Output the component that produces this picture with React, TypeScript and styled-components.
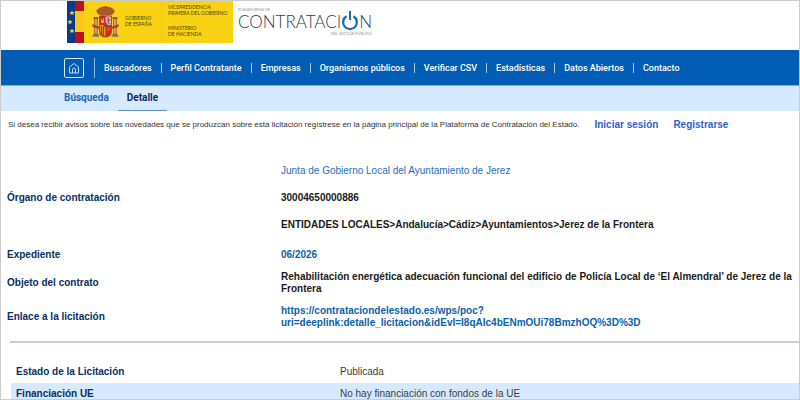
import React from 'react';
import styled, { createGlobalStyle } from 'styled-components';

const GlobalStyle = createGlobalStyle`
  * { box-sizing: border-box; }
  body { margin: 0; background: #fff; overflow: hidden; }
  a { text-decoration: none; color: inherit; }
`;

const Page = styled.div`
  height: 100vh;
  overflow: hidden;
  border: 1px solid #ccc;
  background: #fff;
  font-family: 'Liberation Sans', Arial, sans-serif;
  font-size: 10px;
  line-height: 12px;
  color: #1c1c1c;
`;

const Header = styled.header`
  display: flex;
  align-items: flex-start;
  gap: 5px;
  height: 49px;
  padding-left: 66px;
`;

const GovernmentLogo = styled.div`
  display: flex;
  width: 166px;
  height: 42px;
  background: #f8d213;
  color: #4d4314;
  font-family: Lato, sans-serif;
  font-size: 5px;
  font-weight: 400;
  line-height: 6px;
  white-space: nowrap;

  svg { flex: none; }
`;

const GovernmentName = styled.div`
  width: 41px;
  padding: 14px 0 0 5px;
`;

const Ministry = styled.div`
  display: flex;
  flex-direction: column;
  gap: 9px;
  border-left: 1px solid #edc61a;
  padding: 3px 0 0 6px;
`;

const PlatformLogo = styled.div`
  display: flex;
  flex-direction: column;
  padding-top: 6px;
  color: #8c95a5;
  font-family: Lato, sans-serif;
  font-size: 4px;
  line-height: 6px;
`;

const PlatformWord = styled.div`
  display: flex;
  align-items: center;
  height: 17px;
  color: #2c3a55;
  font-size: 17px;
  font-weight: 300;
  line-height: 17px;
`;

const PlatformSector = styled.span`
  align-self: flex-end;
  padding-top: 1px;
`;

const MainNav = styled.nav`
  display: flex;
  align-items: center;
  height: 36px;
  padding-left: 63px;
  background: #005cb5;
  border-bottom: 1px solid #78aadf;
  color: #fff;
  font-family: Roboto, sans-serif;
  font-weight: 500;
  font-size: 9px;
`;

const HomeLink = styled.a`
  display: flex;
  align-items: center;
  justify-content: center;
  width: 20px;
  height: 20px;
  border: 1px solid #d5e6f7;
  border-radius: 2px;
`;

const NavList = styled.ul`
  display: flex;
  align-items: center;
  height: 20px;
  margin: 0 0 0 10px;
  padding: 0;
  border-left: 1px solid #8dbae5;
  list-style: none;
`;

const NavItem = styled.li`
  padding: 0 9px;
  line-height: 10px;
  white-space: nowrap;

  & + & { border-left: 1px solid #a9cbed; }
`;

const Tabs = styled.nav`
  display: flex;
  height: 25px;
  padding-left: 54px;
  background: #d7e9fe;
  font-family: Roboto, sans-serif;
  font-weight: 700;
`;

const Tab = styled.a<{ $active?: boolean }>`
  padding: 6px 9px 5px;
  color: ${p => (p.$active ? '#0b2c56' : '#1766b3')};
  border-bottom: 1px solid ${p => (p.$active ? '#5b93cb' : 'transparent')};
`;

const Notice = styled.p`
  display: flex;
  margin: 0;
  padding: 8px 7px 0;
  white-space: nowrap;
  color: #333;
`;

const NoticeText = styled.span`
  font-size: 8px;
`;

const NoticeLink = styled.a`
  margin-left: 15px;
  color: #2f62d0;
  font-weight: 700;
`;

const Details = styled.dl`
  display: grid;
  grid-template-columns: 274px 1fr;
  align-items: center;
  row-gap: 10px;
  margin: 34px 0 0;
  padding: 0 4px 0 6px;
`;

const Term = styled.dt`
  color: #07305f;
  font-weight: 700;
`;

const Value = styled.dd<{ $link?: boolean }>`
  display: flex;
  flex-direction: column;
  gap: 15px;
  margin: 0;
  color: ${p => (p.$link ? '#0a5fae' : '#1a1a1a')};
  font-weight: 700;
`;

const Organ = styled.a`
  color: #1d6fbd;
  font-weight: 400;
`;

const ExpedientTerm = styled(Term)`
  padding-top: 8px;
`;

const ExpedientValue = styled(Value)`
  padding-top: 8px;
`;

const Rule = styled.hr`
  height: 2px;
  margin: 12px 0 18px 9px;
  border: 0;
  background: #c9cdd4;
`;

const StatusTable = styled.table`
  width: calc(100% - 10px);
  margin-left: 10px;
  border-collapse: collapse;
  table-layout: fixed;
`;

const StatusRow = styled.tr<{ $shaded?: boolean }>`
  background: ${p => (p.$shaded ? '#d7e9fe' : 'transparent')};

  th, td {
    height: 22px;
    padding: 0 5px;
    text-align: left;
  }
  th { width: 324px; color: #07305f; font-weight: 700; }
  td { color: #3c3c3c; }
`;

const Emblem = () => (
  <svg width="53" height="42" viewBox="0 0 53 42" aria-label="Escudo de España">
    <rect width="8" height="42" fill="#073a8b" />
    <rect x="8" width="9" height="42" fill="#f9c81c" />
    <rect x="8" width="9" height="10" fill="#b8121c" />
    <rect x="8" y="31" width="9" height="11" fill="#b8121c" />
    {[12, 21, 30].map((y, i) => (
      <path
        key={y}
        transform={`translate(${[5, 3, 5][i]} ${y})`}
        fill="#f8e02c"
        d="M0-2.7.7-.8 2.7-.8 1.1.4 1.7 2.3 0 1.1-1.7 2.3-1.1.4-2.7-.8-.7-.8Z"
      />
    ))}
    <g transform="translate(-.5 -1)">
      <path d="M33 15c-4-3-4-5 0-7 2-2 10-2 12 0 4 2 4 4 0 7Z" fill="#b5502a" />
      <path d="M32 12q7-5 14 0M34 15h10M39 8v7M36 9v5M42 9v5" fill="none" stroke="#8e6c25" strokeWidth="1" />
      <path d="M39 6v4M38 7h2" stroke="#8b5a24" strokeWidth="1" />
      <path d="M28 19h3v15h-3ZM47 19h3v15h-3Z" fill="#c9a28b" stroke="#a45a33" strokeWidth=".8" />
      <path d="M27 17h5v2h-5ZM46 17h5v2h-5ZM27 34h5v2h-5ZM46 34h5v2h-5Z" fill="#96602c" />
      <path d="M26 24l7 3v2l-7-2ZM52 24l-7 3v2l7-2Z" fill="#c93420" />
      <path d="M26 36h7M45 36h7" stroke="#6f7e86" strokeWidth="1.500" />
      <path d="M33 16h12v15q0 6-6 6t-6-6Z" fill="#cf2724" stroke="#8f441c" strokeWidth=".8" />
      <path d="M39 16.500h5.500V25H39Z" fill="#dfb9a8" />
      <path d="M41 18l2 2-2 1 2 3" fill="none" stroke="#a84560" strokeWidth="1.200" />
      <path d="M34.500 23v-4h1v1h1v-2h1v5Z" fill="#edad24" />
      <path d="M33.500 25H39v11q-5-1-5.500-5Z" fill="#e6a622" />
      <path d="M35 26v8M37 26v9" stroke="#c72d20" strokeWidth="1.300" />
      <path d="M40 27l4 4M44 27l-4 4M40 29h4M42 26v7" stroke="#d86b25" strokeWidth=".5" />
      <ellipse cx="39" cy="25" rx="1.500" ry="2" fill="#4c528e" stroke="#c8342c" />
    </g>
  </svg>
);

const PowerIcon = () => (
  <svg width="18" height="22" viewBox="0 0 18 22" aria-label="O">
    <path d="M5.600 5.200A6.900 6.900 0 1 0 12.400 5.200" fill="none" stroke="#1c68b8" strokeWidth="2.300" />
    <path d="M9 0v9" stroke="#1c68b8" strokeWidth="2" />
  </svg>
);

const HomeIcon = () => (
  <svg width="12" height="12" viewBox="0 0 12 12" fill="none" stroke="#c3dcf3" strokeWidth="1">
    <path d="M1.500 5 6 1.500 10.500 5v6h-9Z" strokeLinejoin="round" />
    <path d="M4.500 11V7.500a1.500 1.500 0 0 1 3 0V11" />
  </svg>
);

const sections = [
  'Buscadores',
  'Perfil Contratante',
  'Empresas',
  'Organismos públicos',
  'Verificar CSV',
  'Estadísticas',
  'Datos Abiertos',
  'Contacto',
];

const deepLink =
  'https://contrataciondelestado.es/wps/poc?uri=deeplink:detalle_licitacion&idEvl=I8qAlc4bENmOUi78BmzhOQ%3D%3D';

export default function App() {
  return (
    <Page>
      <GlobalStyle />
      <Header>
        <GovernmentLogo>
          <Emblem />
          <GovernmentName>GOBIERNO<br />DE ESPAÑA</GovernmentName>
          <Ministry>
            <span>VICEPRESIDENCIA<br />PRIMERA DEL GOBIERNO</span>
            <span>MINISTERIO<br />DE HACIENDA</span>
          </Ministry>
        </GovernmentLogo>
        <PlatformLogo>
          <span>PLATAFORMA DE</span>
          <PlatformWord>
            <span>CONTRATACI</span>
            <PowerIcon />
            <span>N</span>
          </PlatformWord>
          <PlatformSector>DEL SECTOR PÚBLICO</PlatformSector>
        </PlatformLogo>
      </Header>

      <MainNav aria-label="Principal">
        <HomeLink href="#" aria-label="Inicio"><HomeIcon /></HomeLink>
        <NavList>
          {sections.map(name => (
            <NavItem key={name}><a href="#">{name}</a></NavItem>
          ))}
        </NavList>
      </MainNav>

      <Tabs aria-label="Secciones">
        <Tab href="#">Búsqueda</Tab>
        <Tab href="#" $active aria-current="page">Detalle</Tab>
      </Tabs>

      <main>
        <Notice>
          <NoticeText>
            Si desea recibir avisos sobre las novedades que se produzcan sobre esta licitación regístrese en la página principal de la Plataforma de Contratación del Estado.
          </NoticeText>
          <NoticeLink href="#">Iniciar sesión</NoticeLink>
          <NoticeLink href="#">Registrarse</NoticeLink>
        </Notice>

        <Details>
          <Term>Órgano de contratación</Term>
          <Value>
            <Organ href="#">Junta de Gobierno Local del Ayuntamiento de Jerez</Organ>
            <span>30004650000886</span>
            <span>ENTIDADES LOCALES&gt;Andalucía&gt;Cádiz&gt;Ayuntamientos&gt;Jerez de la Frontera</span>
          </Value>
          <ExpedientTerm>Expediente</ExpedientTerm>
          <ExpedientValue $link>06/2026</ExpedientValue>
          <Term>Objeto del contrato</Term>
          <Value>
            Rehabilitación energética adecuación funcional del edificio de Policía Local de ‘El Almendral’ de Jerez de la Frontera
          </Value>
          <Term>Enlace a la licitación</Term>
          <Value $link>
            <a href={deepLink}>
              https://contrataciondelestado.es/wps/poc?<wbr />uri=deeplink:detalle_licitacion&amp;idEvl=I8qAlc4bENmOUi78BmzhOQ%3D%3D
            </a>
          </Value>
        </Details>

        <Rule />

        <StatusTable>
          <tbody>
            <StatusRow>
              <th scope="row">Estado de la Licitación</th>
              <td>Publicada</td>
            </StatusRow>
            <StatusRow $shaded>
              <th scope="row">Financiación UE</th>
              <td>No hay financiación con fondos de la UE</td>
            </StatusRow>
          </tbody>
        </StatusTable>
      </main>
    </Page>
  );
}
